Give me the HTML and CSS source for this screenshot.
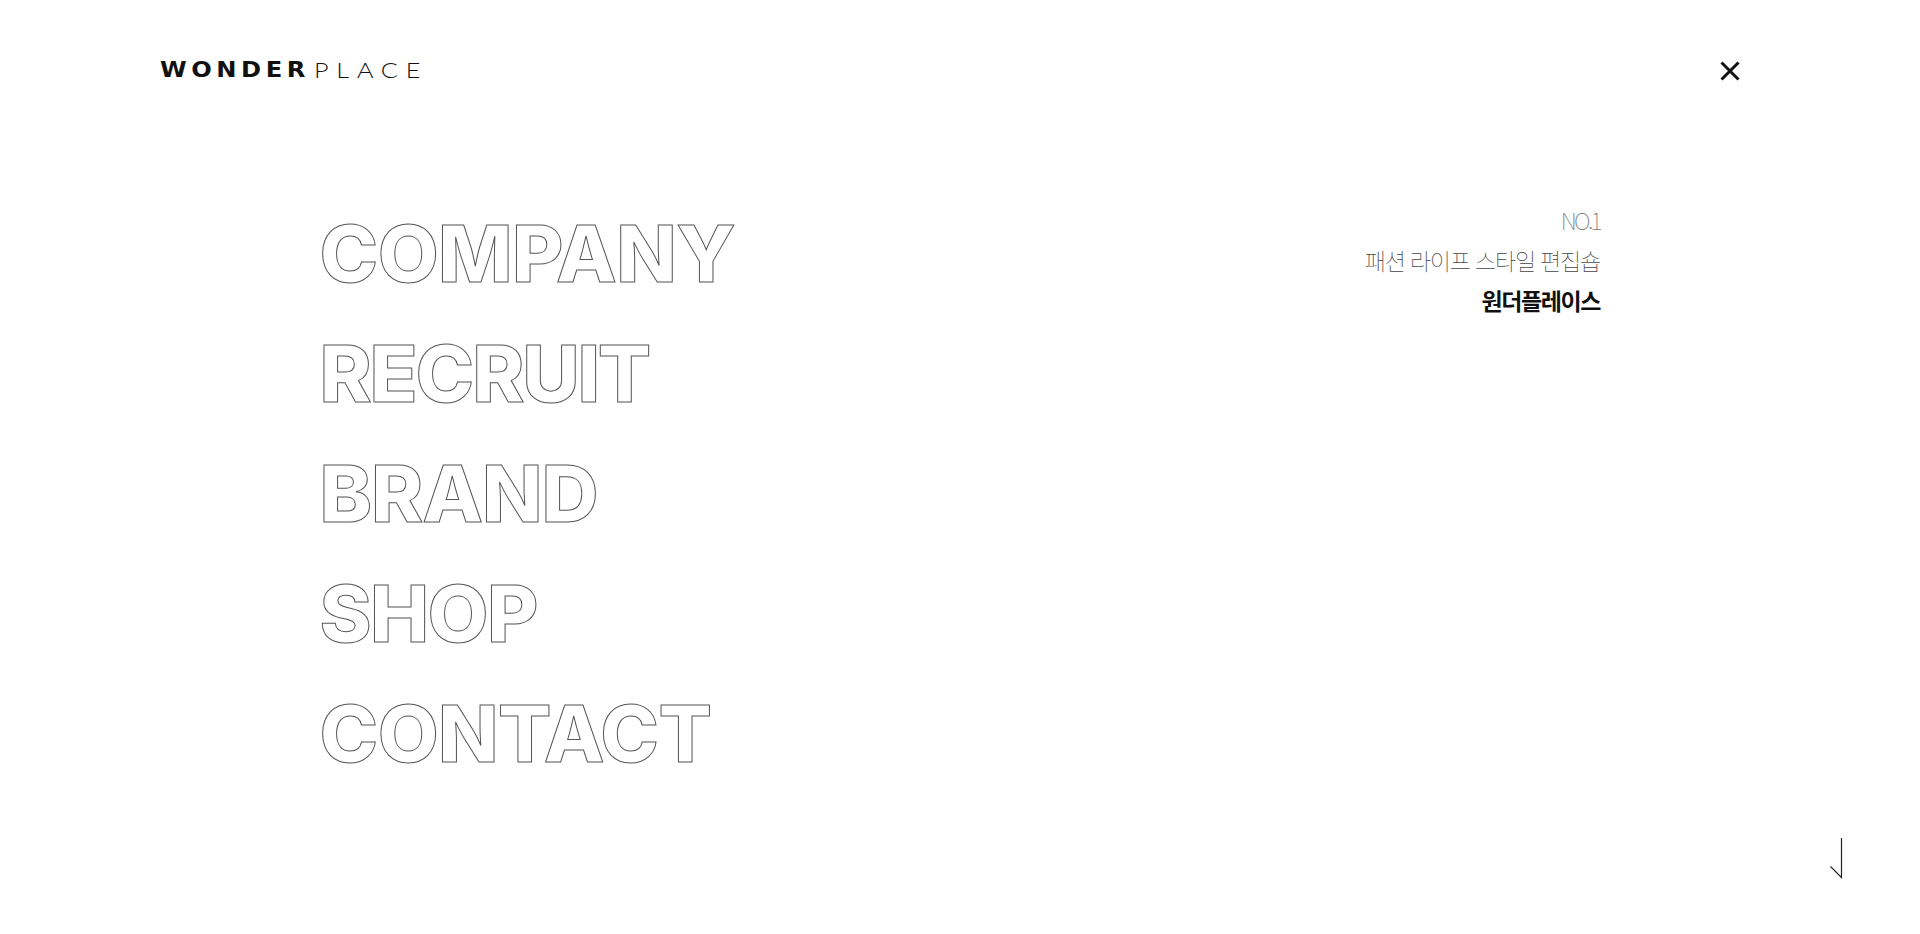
FILE: index.html
```html
<!DOCTYPE html>
<html lang="ko">
<head>
  <meta charset="UTF-8" />
  <title>WONDERPLACE</title>
  <link rel="stylesheet" href="styles.css">
</head>
<body>
  <div class="page">
    <header class="top">
      <a class="logo"><span class="logo-bold">WONDER</span><span class="logo-thin">PLACE</span></a>
      <button class="close" aria-label="close">
        <svg width="20" height="20" viewBox="0 0 20 20"><path d="M1.5 1.5 18.5 18.5M18.5 1.5 1.5 18.5" stroke="#111" stroke-width="3" fill="none"/></svg>
      </button>
    </header>

    <main class="content">
      <nav class="menu">
        <a class="item-company">COMPANY</a>
        <a class="item-recruit">RECRUIT</a>
        <a class="item-brand">BRAND</a>
        <a class="item-shop">SHOP</a>
        <a class="item-contact">CONTACT</a>
      </nav>
      <div class="slogan">
        <p class="no1">NO.1</p>
        <p class="desc">패션 라이프 스타일 편집숍</p>
        <p class="name">원더플레이스</p>
      </div>
    </main>

    <footer class="bottom">
      <svg width="14" height="42" viewBox="0 0 14 42"><path d="M12.5 1V40.5L1.5 29.5" stroke="#222" stroke-width="1.2" fill="none"/></svg>
    </footer>
  </div>
</body>
</html>
```

FILE: styles.css
```css
* {
  box-sizing: border-box;
}

body {
  margin: 0;
  background-color: #fff;
  font-family: 'Inter', 'Noto Sans CJK KR', sans-serif;
}

p {
  margin: 0;
}

.page {
  display: flex;
  flex-direction: column;
  height: 934px;
  overflow: hidden;
}

.top {
  display: flex;
  justify-content: space-between;
  align-items: center;
  height: 140px;
  padding: 1px 180px 0 160px;
}

.logo {
  display: flex;
  align-items: center;
  margin-top: -2px;
  color: #111;
  line-height: 1;
}

.logo-bold {
  width: 154px;
  font-family: 'DejaVu Sans', sans-serif;
  font-weight: 700;
  font-size: 22px;
  letter-spacing: 4.1px;
  transform: scaleX(1.1);
  transform-origin: left center;
}

.logo-thin {
  font-family: 'Lato', sans-serif;
  font-weight: 300;
  font-size: 21px;
  letter-spacing: 6.5px;
  transform: scaleX(1.2);
  transform-origin: left center;
}

.close {
  display: flex;
  padding: 0;
  border: none;
  background: none;
}

.content {
  display: flex;
  justify-content: space-between;
  padding: 53px 320px 0 319.5px;
}

.menu {
  display: flex;
  flex-direction: column;
}

.menu a {
  height: 120px;
  line-height: 120px;
  font-size: 79px;
  font-weight: 800;
  color: #fff;
  -webkit-text-stroke: 1px #555;
}

.item-company { letter-spacing: -0.6px; }
.item-recruit { letter-spacing: -2.2px; }
.item-brand   { letter-spacing: -1px; }
.item-shop    { letter-spacing: -1.6px; }
.item-contact { letter-spacing: -0.6px; }

.slogan {
  display: flex;
  flex-direction: column;
  align-items: flex-end;
  padding-top: 7px;
  font-family: 'Noto Sans CJK KR', sans-serif;
  font-size: 23px;
  line-height: 40px;
}

.no1 {
  font-weight: 100;
  letter-spacing: -2.6px;
  color: #777;
}

.desc {
  font-weight: 100;
  letter-spacing: -1.2px;
  color: #444;
}

.name {
  font-weight: 700;
  letter-spacing: -1.4px;
  color: #111;
}

.bottom {
  display: flex;
  justify-content: flex-end;
  margin-top: auto;
  padding: 0 77px 55px 0;
}
```
